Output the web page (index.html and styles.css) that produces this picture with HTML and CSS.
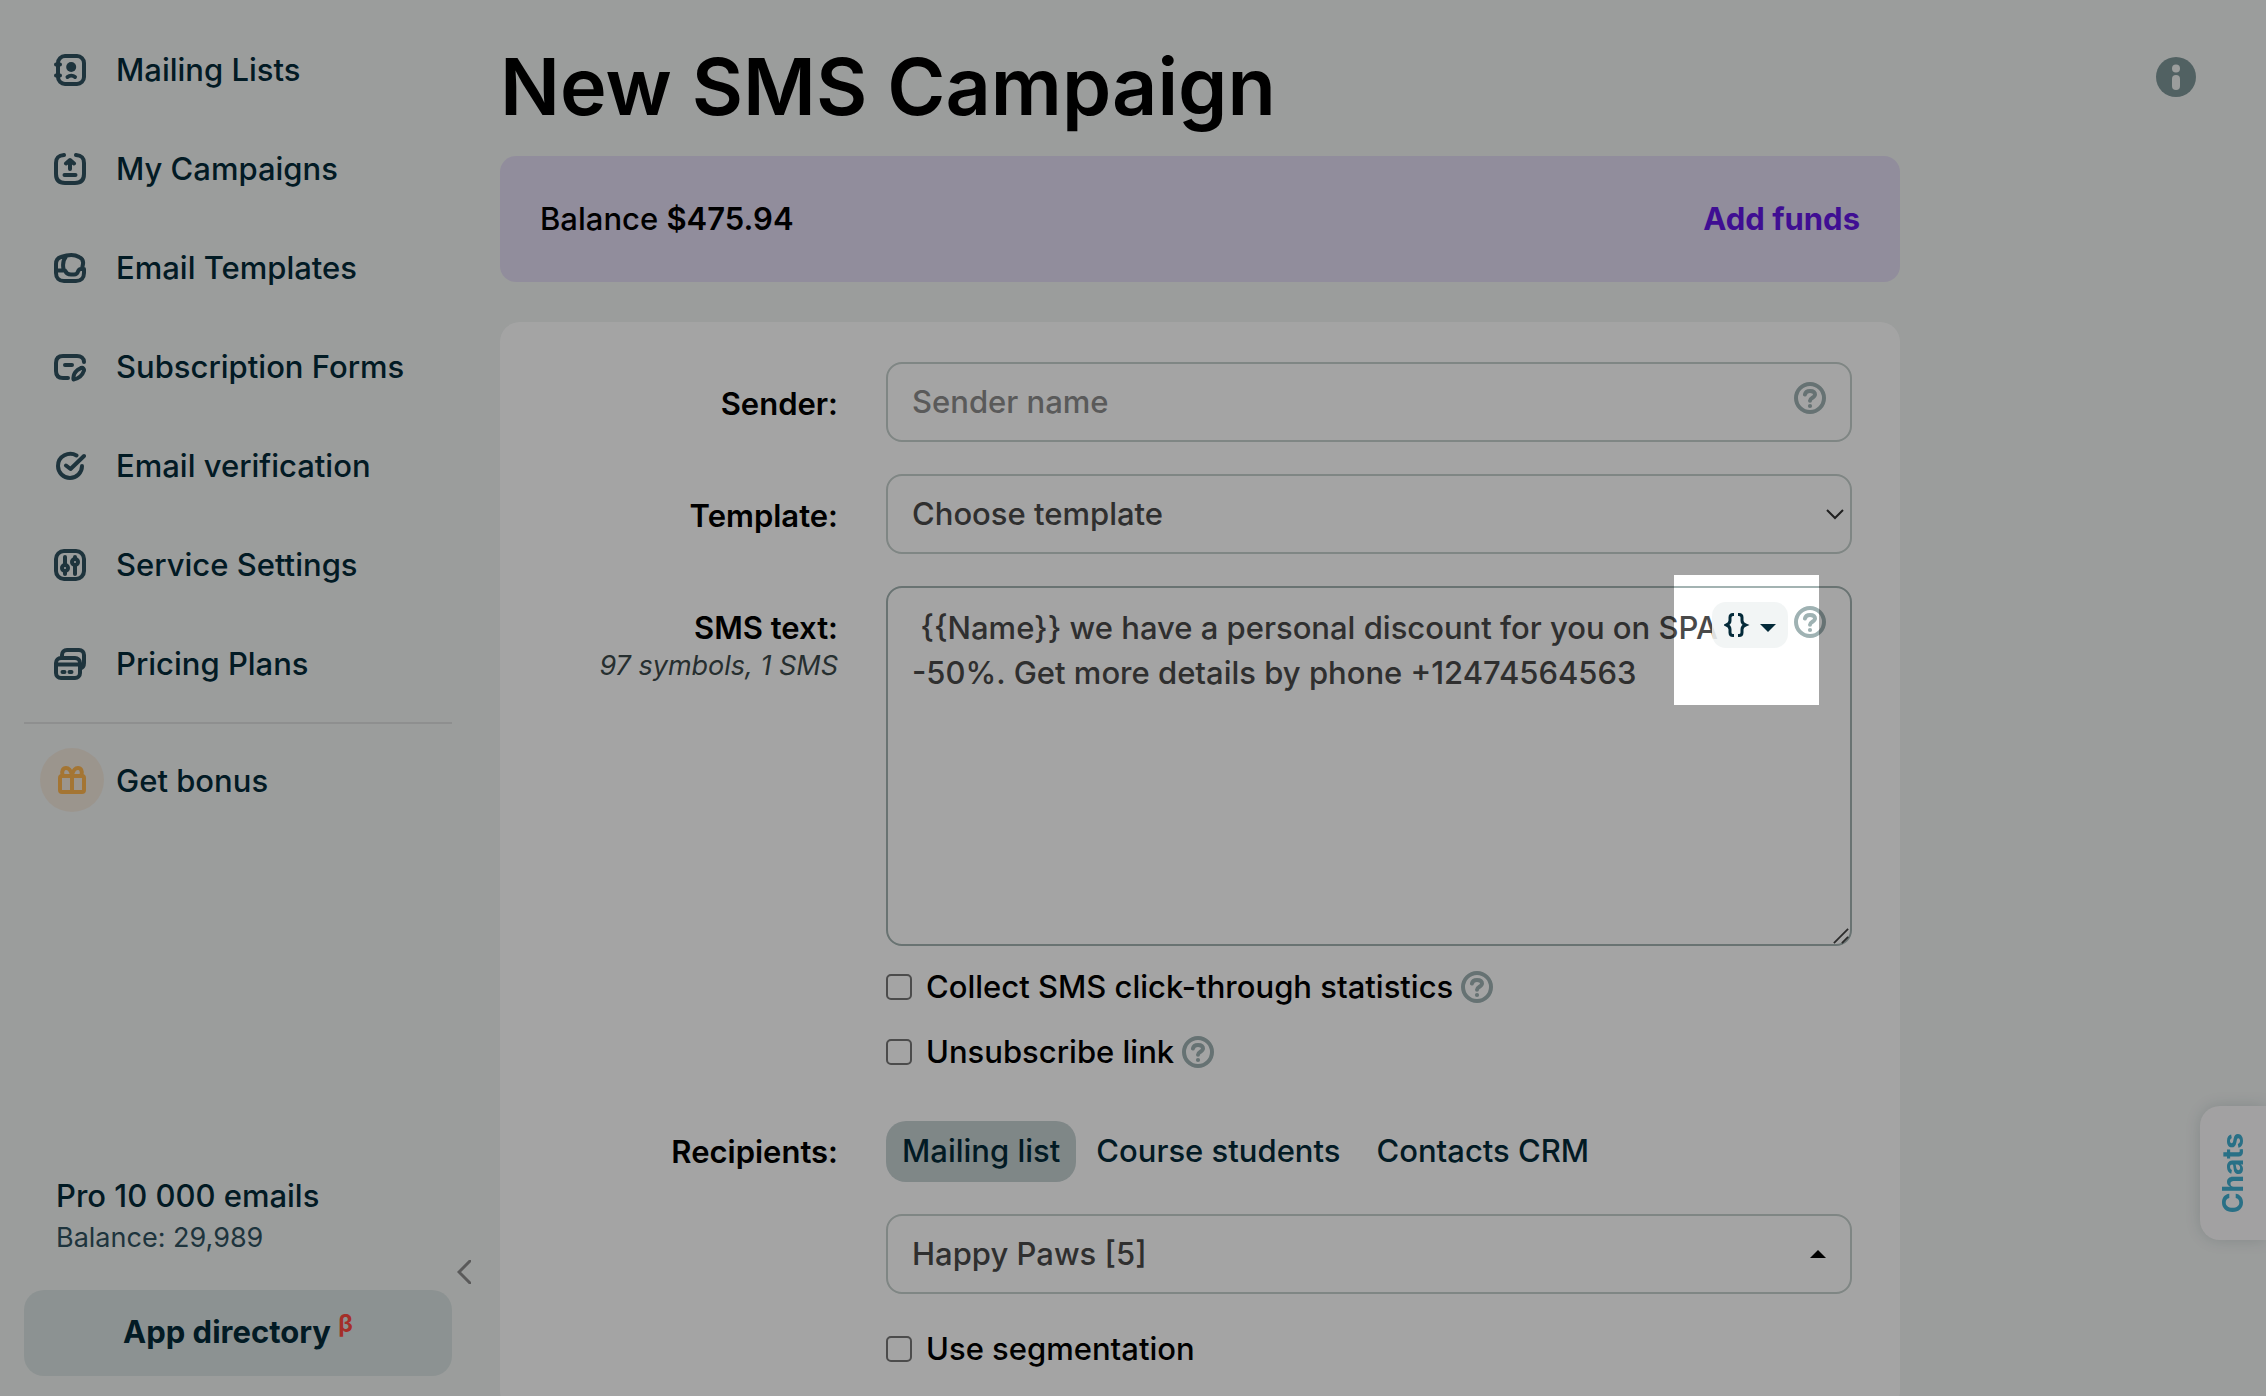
FILE: index.html
```html
<!DOCTYPE html>
<html lang="en">
<head>
    <meta charset="UTF-8">
    <meta name="viewport" content="width=device-width, initial-scale=1.0">
    <title>New SMS Campaign</title>
    <link rel="stylesheet" href="styles.css">
</head>
<body>
    <svg class="sprite" aria-hidden="true">
        <symbol id="help" viewBox="0 0 32 32">
            <circle cx="16" cy="16" r="14" fill="none" stroke="currentColor" stroke-width="4"/>
            <path d="M10.9 12.6C11.4 10 13.2 8.9 16 8.9c3 0 5 1.3 5 3.7 0 3.2-5 3.2-5 6.2" fill="none" stroke="currentColor" stroke-width="4" stroke-linecap="round"/>
            <circle cx="16" cy="24" r="2.1" fill="currentColor"/>
        </symbol>
    </svg>
    <div class="page">
        <aside class="sidebar">
            <nav class="menu">
                <a href="#" class="menu-item">
                    <svg class="menu-icon" viewBox="0 0 32 32"><rect x="4" y="2" width="26" height="28" rx="7"/><path d="M2 10.5h4M2 21.5h4M13.5 23c2-1.6 5.5-1.6 7.5 0"/><circle cx="17.2" cy="13" r="5" class="fill"/></svg>
                    <span>Mailing Lists</span>
                </a>
                <a href="#" class="menu-item">
                    <svg class="menu-icon" viewBox="0 0 32 32"><path d="M10 2C4.5 2.5 2 4.5 2 10v11c0 6 3 9 9 9h10c6 0 9-3 9-9V10c0-5.5-2.5-7.5-8-8M10.5 22h11M16 16V8M12 10.5L16 7l4 3.5"/></svg>
                    <span>My Campaigns</span>
                </a>
                <a href="#" class="menu-item">
                    <svg class="menu-icon" viewBox="0 0 32 32"><path d="M2 17v4c0 5 3 8 8 8h12c5 0 8-3 8-8v-4h-3c-2 0-2.5 1-3 2.500-.6 2-1.500 3-4 3h-3c-3 0-5-1.500-6-4H2V12c0-4 1.500-6 5-7 6-2 13-3 18 0 3.500 1.500 4.500 4 4 7l-1 5M12 4.500C9.500 7.500 8.500 12 9.500 17"/></svg>
                    <span>Email Templates</span>
                </a>
                <a href="#" class="menu-item">
                    <svg class="menu-icon" viewBox="0 0 32 32"><path d="M30 11c0-4-3-6-7-6H9c-4.500 0-7 2.500-7 7v8c0 4.500 2.500 7 7 7h5M11 14h7M19.500 28.500c-.5-4 1-7 4-9.500l3.500-2c2-.7 3.500 1 2.800 3-1.300 4-5 7.500-10.300 8.500z"/></svg>
                    <span>Subscription Forms</span>
                </a>
                <a href="#" class="menu-item">
                    <svg class="menu-icon" viewBox="0 0 32 32"><path d="M22.5 5.5C15 1 4 6 4 16c0 6.6 5.4 12 12 12s12-5.400 12-12M12 15.500l4.500 3.500L30 6"/></svg>
                    <span>Email verification</span>
                </a>
                <a href="#" class="menu-item">
                    <svg class="menu-icon" viewBox="0 0 32 32"><rect x="2" y="2" width="28" height="28" rx="8"/><path d="M11 8v7M11 23v2M21 8v2M21 17v8"/><circle cx="11" cy="19" r="3"/><circle cx="21" cy="13" r="3"/></svg>
                    <span>Service Settings</span>
                </a>
                <a href="#" class="menu-item">
                    <svg class="menu-icon" viewBox="0 0 32 32"><path d="M8 8V7c0-3 2-5 5-5h12c3 0 5 2 5 5v8c0 3-1.500 5-4 5.500"/><rect x="2" y="10" width="24" height="20" rx="5"/><path d="M2 16.500h24M8.500 24h2M15.500 24h2"/></svg>
                    <span>Pricing Plans</span>
                </a>
            </nav>
            <hr class="divider">
            <a href="#" class="bonus">
                <span class="bonus-icon">
                    <svg viewBox="0 0 28 28"><rect x="2" y="10" width="24" height="16" rx="2"/><path d="M14 10v16M4.500 9c-1-4 .5-7 3.500-7s5 3 6 7c1-4 3-7 6-7s4.500 3 3.500 7"/></svg>
                </span>
                <span>Get bonus</span>
            </a>
            <div class="sidebar-bottom">
                <div class="plan">
                    <div>
                        <div class="plan-name">Pro 10 000 emails</div>
                        <div class="plan-balance">Balance: 29,989</div>
                    </div>
                    <button type="button" class="collapse" aria-label="Collapse menu">
                        <svg viewBox="0 0 14 24"><path d="M13 1L2 12l11 11"/></svg>
                    </button>
                </div>
                <a href="#" class="app-directory">App directory <sup>β</sup></a>
            </div>
        </aside>

        <main class="content">
            <h1>New SMS Campaign</h1>
            <div class="balance">
                <span>Balance <b>$475.94</b></span>
                <a href="#" class="add-funds">Add funds</a>
            </div>
            <form class="card">
                <label class="label" for="sender">Sender:</label>
                <div class="field">
                    <input type="text" id="sender" class="control" placeholder="Sender name">
                    <svg class="help field-help"><use href="#help"/></svg>
                </div>

                <label class="label" for="template">Template:</label>
                <div class="field">
                    <select id="template" class="control">
                        <option>Choose template</option>
                    </select>
                    <svg class="chevron" viewBox="0 0 18 12"><path d="M1 1l8 8 8-8"/></svg>
                </div>

                <div class="label">
                    <label for="smsText">SMS text:</label>
                    <div class="counter">97 symbols, 1 SMS</div>
                </div>
                <div class="field">
                    <textarea id="smsText" class="control sms-text"> {{Name}} we have a personal discount for you on SPA
-50%. Get more details by phone +12474564563</textarea>
                    <svg class="grip" viewBox="0 0 18 18"><path d="M1 17L17 1M10 17l7-7"/></svg>
                    <!-- highlighted area, its shadow dims the rest of the page -->
                    <div class="spotlight"></div>
                    <button type="button" class="variables" aria-label="Variables">
                        <svg viewBox="0 0 52 24"><path d="M10 1.5H9c-2 0-3 1-3 3v3c0 2-1 3.500-3.500 4.500C5 13 6 14.500 6 16.500v3c0 2 1 3 3 3h1M14 1.500h1c2 0 3 1 3 3v3c0 2 1 3.500 3.500 4.500-2.500 1-3.500 2.500-3.500 4.500v3c0 2-1 3-3 3h-1"/><path d="M36 11h16l-8 8z" class="caret"/></svg>
                    </button>
                    <svg class="help field-help"><use href="#help"/></svg>
                </div>

                <div class="options">
                    <div class="check">
                        <input type="checkbox" id="stats">
                        <label for="stats">Collect SMS click-through statistics</label>
                        <svg class="help"><use href="#help"/></svg>
                    </div>
                    <div class="check">
                        <input type="checkbox" id="unsubscribe">
                        <label for="unsubscribe">Unsubscribe link</label>
                        <svg class="help"><use href="#help"/></svg>
                    </div>
                </div>

                <label class="label recipients-label" for="list">Recipients:</label>
                <div class="recipients">
                    <div class="tabs">
                        <button type="button" class="tab active">Mailing list</button>
                        <button type="button" class="tab">Course students</button>
                        <button type="button" class="tab">Contacts CRM</button>
                    </div>
                    <div class="field">
                        <select id="list" class="control">
                            <option>Happy Paws [5]</option>
                        </select>
                        <svg class="arrow-up" viewBox="0 0 16 8"><path d="M0 8h16L8 0z"/></svg>
                    </div>
                    <div class="check">
                        <input type="checkbox" id="segmentation">
                        <label for="segmentation">Use segmentation</label>
                    </div>
                </div>
            </form>
        </main>
        <button type="button" class="info" aria-label="Info">
            <svg viewBox="0 0 40 40"><circle cx="20" cy="20" r="20"/><circle cx="20" cy="11.5" r="4" class="hole"/><rect x="16" y="18" width="8" height="15" rx="4" class="hole"/></svg>
        </button>
    </div>
    <button type="button" class="chats"><span>Chats</span></button>
</body>
</html>
```
FILE: styles.css
```css
* {
    box-sizing: border-box;
}
body {
    margin: 0;
    height: 100vh;
    overflow: hidden;
    background-color: #F1F4F3;
    color: #000;
    font-family: Inter, "Liberation Sans", sans-serif;
    font-size: 31px;
    font-weight: 500;
    line-height: 45px;
}
a {
    color: inherit;
    text-decoration: none;
}
button, input, select, textarea {
    font: inherit;
    color: inherit;
}
button {
    border: none;
    padding: 0;
    background: none;
    cursor: pointer;
}
svg {
    display: block;
}
.sprite {
    display: none;
}
.page {
    display: flex;
    height: 100vh;
}

/* Sidebar */
.sidebar {
    display: flex;
    flex-direction: column;
    flex: none;
    width: 500px;
    padding: 20px 48px 20px 24px;
    color: #042A39;
}
.menu-item {
    display: flex;
    align-items: center;
    gap: 30px;
    height: 99px;
    padding-left: 30px;
}
.menu-icon {
    width: 32px;
    height: 32px;
    fill: none;
    stroke: #30515F;
    stroke-width: 4;
    stroke-linecap: round;
    stroke-linejoin: round;
}
.menu-icon .fill {
    fill: #30515F;
    stroke: none;
}
.divider {
    width: 100%;
    height: 2px;
    margin: 9px 0 24px;
    border: none;
    background-color: #DDDFDE;
}
.bonus {
    display: flex;
    align-items: center;
    gap: 12px;
    padding-left: 16px;
}
.bonus-icon {
    display: flex;
    align-items: center;
    justify-content: center;
    width: 64px;
    height: 64px;
    border-radius: 50%;
    background-color: #F1E8DC;
}
.bonus-icon svg {
    width: 28px;
    height: 28px;
    fill: none;
    stroke: #FFB650;
    stroke-width: 4;
}
.sidebar-bottom {
    margin-top: auto;
    margin-right: -24px;
}
.plan {
    display: flex;
    align-items: flex-end;
    justify-content: space-between;
    padding: 0 5px 6px 32px;
}
.plan-balance {
    margin-bottom: 26px;
    color: #30515F;
    font-size: 27px;
    font-weight: 400;
    line-height: 40px;
}
.collapse svg {
    width: 14px;
    height: 24px;
    fill: none;
    stroke: #8C8C8C;
    stroke-width: 3;
    stroke-linecap: round;
}
.app-directory {
    display: block;
    margin-right: 24px;
    padding: 19px 20px 21px;
    border-radius: 20px;
    background-color: #DAE4E3;
    font-weight: 700;
    line-height: 46px;
    text-align: center;
}
.app-directory sup {
    color: #FF4A41;
    font-size: 24px;
    line-height: 0;
}

/* Content */
.content {
    flex: 0 1 1400px;
}
h1 {
    margin: 0;
    padding: 36px 0 20px;
    font-size: 79px;
    font-weight: 600;
    line-height: 100px;
}
.balance {
    display: flex;
    align-items: center;
    justify-content: space-between;
    height: 126px;
    margin-bottom: 40px;
    padding: 0 40px 2px;
    border-radius: 16px;
    background-color: #E2DBF3;
}
.balance b {
    font-weight: 600;
}
.add-funds {
    color: #6216E5;
    font-weight: 700;
}
.card {
    display: grid;
    grid-template-columns: 290px 1fr;
    gap: 32px 48px;
    padding: 40px 48px;
    border-radius: 20px;
    background-color: #fff;
}
.label {
    padding-top: 19px;
    font-weight: 600;
    text-align: right;
}
.counter {
    color: #3C4A4B;
    font-size: 27px;
    font-style: italic;
    font-weight: 400;
    line-height: 32px;
    white-space: nowrap;
}
.field {
    position: relative;
}
.control {
    display: block;
    width: 100%;
    height: 80px;
    margin: 0;
    padding: 0 24px 2px;
    border: 2px solid #C6D0CD;
    border-radius: 16px;
    background-color: transparent;
    color: #494949;
    appearance: none;
    outline: none;
}
.control::placeholder {
    color: #8C8C8C;
    opacity: 1;
}
.sms-text {
    height: 360px;
    padding: 17px 24px;
    border-color: #A3B3B2;
    resize: none;
}
.help {
    flex: none;
    width: 32px;
    height: 32px;
    color: #9FB2B3;
}
.field-help {
    position: absolute;
    top: 20px;
    right: 26px;
}
.chevron {
    position: absolute;
    top: 35px;
    right: 8px;
    width: 18px;
    height: 12px;
    fill: none;
    stroke: #333;
    stroke-width: 2;
    pointer-events: none;
}
.arrow-up {
    position: absolute;
    top: 36px;
    right: 26px;
    width: 16px;
    height: 8px;
    pointer-events: none;
}
.grip {
    position: absolute;
    right: 3px;
    bottom: 2px;
    width: 16px;
    height: 16px;
    stroke: #444;
    stroke-width: 2;
}
.variables {
    position: absolute;
    top: 16px;
    right: 64px;
    width: 76px;
    height: 46px;
    padding: 9px 12px;
    border-radius: 14px;
    background-color: rgba(240, 244, 244, 0.88);
}
.variables svg {
    width: 52px;
    height: 24px;
    fill: none;
    stroke: #042A39;
    stroke-width: 3;
}
.variables .caret {
    fill: #042A39;
    stroke: none;
}
.spotlight {
    position: absolute;
    top: -11px;
    right: 33px;
    z-index: 10;
    width: 145px;
    height: 130px;
    box-shadow: 0 0 0 3000px rgba(0, 0, 0, 0.355);
    pointer-events: none;
}
.options {
    display: flex;
    flex-direction: column;
    grid-column: 2;
    gap: 20px;
    margin-top: -14px;
}
.check {
    display: flex;
    align-items: center;
}
.check input {
    width: 26px;
    height: 26px;
    margin: 0 14px 0 0;
    border: 2px solid #767676;
    border-radius: 5px;
    appearance: none;
}
.check .help {
    margin-left: 8px;
}
.recipients-label {
    margin-top: 15px;
    padding-top: 8px;
}
.recipients {
    display: flex;
    flex-direction: column;
    gap: 32px;
    margin-top: 15px;
}
.tabs {
    display: flex;
    gap: 4px;
}
.tab {
    padding: 7px 16px 9px;
    border-radius: 20px;
    color: #042A39;
}
.tab.active {
    background-color: #C6D2D3;
}
.info {
    align-self: flex-start;
    margin: 57px 70px 0 auto;
}
.info svg {
    width: 40px;
    height: 40px;
    fill: #7F9799;
}
.info .hole {
    fill: #F1F4F3;
}
.chats {
    display: flex;
    align-items: center;
    justify-content: center;
    position: fixed;
    right: 0;
    bottom: 156px;
    width: 66px;
    height: 134px;
    border-radius: 20px 0 0 20px;
    background-color: #FCFBFC;
    box-shadow: 0 0 16px rgba(0, 40, 50, 0.14);
    color: #41AED0;
    font-size: 28px;
    font-weight: 700;
}
.chats span {
    writing-mode: vertical-rl;
    transform: rotate(180deg);
}
```
